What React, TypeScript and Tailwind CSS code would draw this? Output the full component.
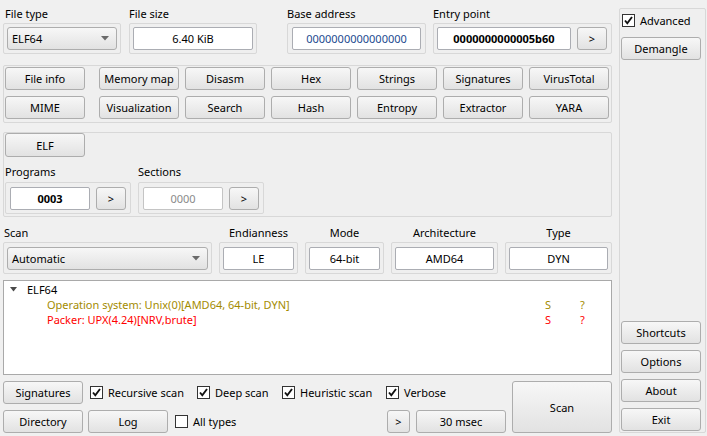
import React from "react";

const Btn = ({ children, className = "" }: { children?: React.ReactNode; className?: string }) => (
  <div
    className={`h-[23px] rounded-[3px] border border-[#adadad] bg-linear-to-b from-[#f7f7f7] to-[#e2e2e2] flex items-center justify-center text-black shrink-0 ${className}`}
  >
    {children}
  </div>
);

const Field = ({ children, className = "" }: { children?: React.ReactNode; className?: string }) => (
  <div
    className={`h-[23px] rounded-[2px] border border-[#abadb3] bg-white flex items-center justify-center shrink-0 ${className}`}
  >
    {children}
  </div>
);

const Frame = ({ children, className = "" }: { children?: React.ReactNode; className?: string }) => (
  <div className={`rounded-[2px] border border-[#d8d8d8] bg-[#efefef] flex items-center ${className}`}>{children}</div>
);

const Combo = ({ text, className = "" }: { text: string; className?: string }) => (
  <div
    className={`h-[23px] rounded-[3px] border border-[#adadad] bg-linear-to-b from-[#f7f7f7] to-[#e2e2e2] flex items-center justify-between pl-[4px] pr-[7px] ${className}`}
  >
    <span>{text}</span>
    <svg width="8" height="5" viewBox="0 0 8 5">
      <polygon points="0,0 8,0 4,4.5" fill="#6a6a6a" />
    </svg>
  </div>
);

const Check = ({ checked, label, className = "" }: { checked: boolean; label: string; className?: string }) => (
  <div className={`flex items-center shrink-0 ${className}`}>
    <div className="w-[13px] h-[13px] border border-[#333] bg-white flex items-center justify-center">
      {checked && (
        <svg width="9" height="9" viewBox="0 0 9 9">
          <polyline points="1,4.5 3.3,7.3 8,1" fill="none" stroke="#111" strokeWidth="1.9" />
        </svg>
      )}
    </div>
    <span className="ml-[5px]">{label}</span>
  </div>
);

const Label = ({ children, className = "" }: { children?: React.ReactNode; className?: string }) => (
  <div className={`h-[15px] flex items-center ${className}`}>{children}</div>
);

export default function App() {
  return (
    <div className="w-[707px] h-[436px] bg-[#f0f0f0] flex font-['Noto_Sans',sans-serif] text-[11px] leading-none text-black overflow-hidden">
      {/* left column */}
      <div className="w-[612px] pl-[3px] flex flex-col shrink-0">
        {/* top row */}
        <div className="flex mt-[6px]">
          <div className="flex flex-col w-[118px]">
            <Label className="pl-[2px]">File type</Label>
            <Frame className="mt-[2px] h-[31px] px-[3px]">
              <Combo text="ELF64" className="w-full" />
            </Frame>
          </div>
          <div className="flex flex-col w-[128px] ml-[8px]">
            <Label>File size</Label>
            <Frame className="mt-[2px] h-[31px] px-[3px]">
              <Field className="w-full">6.40 KiB</Field>
            </Frame>
          </div>
          <div className="flex flex-col w-[139px] ml-[30px]">
            <Label>Base address</Label>
            <Frame className="mt-[2px] h-[31px] px-[4px]">
              <Field className="w-full text-[#1b4a8f]">0000000000000000</Field>
            </Frame>
          </div>
          <div className="flex flex-col w-[179px] ml-[7px]">
            <Label>Entry point</Label>
            <Frame className="mt-[2px] h-[31px] px-[3px] gap-[6px]">
              <Field className="w-[134px] font-bold">0000000000005b60</Field>
              <Btn className="w-[30px]">&gt;</Btn>
            </Frame>
          </div>
        </div>

        {/* button grid */}
        <div className="mt-[11px] h-[58px] w-[609px] rounded-[2px] border border-[#d8d8d8] bg-[#efefef] flex flex-col pt-[1px] pl-[1px] gap-[6px]">
          <div className="flex">
            <Btn className="w-[80px]">File info</Btn>
            <Btn className="w-[80px] ml-[14px]">Memory map</Btn>
            <Btn className="w-[80px] ml-[6px]">Disasm</Btn>
            <Btn className="w-[80px] ml-[6px]">Hex</Btn>
            <Btn className="w-[80px] ml-[6px]">Strings</Btn>
            <Btn className="w-[80px] ml-[6px]">Signatures</Btn>
            <Btn className="w-[80px] ml-[6px]">VirusTotal</Btn>
          </div>
          <div className="flex">
            <Btn className="w-[80px]">MIME</Btn>
            <Btn className="w-[80px] ml-[14px]">Visualization</Btn>
            <Btn className="w-[80px] ml-[6px]">Search</Btn>
            <Btn className="w-[80px] ml-[6px]">Hash</Btn>
            <Btn className="w-[80px] ml-[6px]">Entropy</Btn>
            <Btn className="w-[80px] ml-[6px]">Extractor</Btn>
            <Btn className="w-[80px] ml-[6px]">YARA</Btn>
          </div>
        </div>

        {/* ELF group */}
        <div className="mt-[9px] h-[85px] w-[609px] rounded-[2px] border border-[#d8d8d8] bg-[#efefef] flex flex-col pl-[1px]">
          <Btn className="w-[80px] h-[24px]">ELF</Btn>
          <div className="flex mt-[7px]">
            <div className="flex flex-col w-[126px]">
              <Label>Programs</Label>
              <Frame className="mt-[3px] h-[32px] px-[4px] gap-[6px]">
                <Field className="w-[80px] font-bold">0003</Field>
                <Btn className="w-[30px]">&gt;</Btn>
              </Frame>
            </div>
            <div className="flex flex-col w-[126px] ml-[7px]">
              <Label>Sections</Label>
              <Frame className="mt-[3px] h-[32px] px-[4px] gap-[6px]">
                <Field className="w-[80px] border-[#c4c4c4] bg-[#f3f3f3] text-[#8a8a8a]">0000</Field>
                <Btn className="w-[30px]">&gt;</Btn>
              </Frame>
            </div>
          </div>
        </div>

        {/* scan row */}
        <div className="flex mt-[8px]">
          <div className="flex flex-col w-[209px]">
            <Label className="pl-[1px]">Scan</Label>
            <Frame className="mt-[2px] h-[32px] px-[3px]">
              <Combo text="Automatic" className="w-full" />
            </Frame>
          </div>
          <div className="flex flex-col w-[79px] ml-[7px]">
            <Label className="justify-center">Endianness</Label>
            <Frame className="mt-[2px] h-[32px] px-[3px]">
              <Field className="w-full">LE</Field>
            </Frame>
          </div>
          <div className="flex flex-col w-[79px] ml-[7px]">
            <Label className="justify-center">Mode</Label>
            <Frame className="mt-[2px] h-[32px] px-[3px]">
              <Field className="w-full">64-bit</Field>
            </Frame>
          </div>
          <div className="flex flex-col w-[107px] ml-[7px]">
            <Label className="justify-center">Architecture</Label>
            <Frame className="mt-[2px] h-[32px] px-[3px]">
              <Field className="w-full">AMD64</Field>
            </Frame>
          </div>
          <div className="flex flex-col w-[107px] ml-[7px]">
            <Label className="justify-center">Type</Label>
            <Frame className="mt-[2px] h-[32px] px-[3px]">
              <Field className="w-full">DYN</Field>
            </Frame>
          </div>
        </div>

        {/* tree */}
        <div className="mt-[6px] h-[95px] w-[609px] border border-[#a9a9a9] bg-white pt-[1px] flex flex-col">
          <div className="h-[15px] flex items-center">
            <svg width="7" height="5" viewBox="0 0 7 5" className="ml-[6px]">
              <polygon points="0,0 7,0 3.5,4.5" fill="#4a4a4a" />
            </svg>
            <span className="ml-[10px]">ELF64</span>
          </div>
          <div className="h-[15px] flex items-center text-[#a38b00]">
            <span className="ml-[43px] w-[498px]">Operation system: Unix(0)[AMD64, 64-bit, DYN]</span>
            <span className="w-[35px]">S</span>
            <span>?</span>
          </div>
          <div className="h-[15px] flex items-center text-[#ff0000]">
            <span className="ml-[43px] w-[498px]">Packer: UPX(4.24)[NRV,brute]</span>
            <span className="w-[35px]">S</span>
            <span>?</span>
          </div>
        </div>

        {/* bottom */}
        <div className="mt-[6px] flex">
          <div className="flex flex-col w-[509px] gap-[6px]">
            <div className="flex items-center">
              <Btn className="w-[80px]">Signatures</Btn>
              <Check checked label="Recursive scan" className="ml-[7px] w-[107px]" />
              <Check checked label="Deep scan" className="w-[85px]" />
              <Check checked label="Heuristic scan" className="w-[104px]" />
              <Check checked label="Verbose" />
            </div>
            <div className="flex items-center">
              <Btn className="w-[80px]">Directory</Btn>
              <Btn className="w-[80px] ml-[5px]">Log</Btn>
              <Check checked={false} label="All types" className="ml-[7px] w-[212px]" />
              <Btn className="w-[23px]">&gt;</Btn>
              <Btn className="w-[90px] ml-[6px]">30 msec</Btn>
            </div>
          </div>
          <Btn className="w-[100px] h-[52px]">Scan</Btn>
        </div>
      </div>

      {/* right column */}
      <div className="ml-[7px] mt-[8px] w-[87px] h-[425px] rounded-[2px] border border-[#d8d8d8] bg-[#efefef] flex flex-col pl-[1px]">
        <div className="h-[22px] flex items-center pl-[1px]">
          <Check checked label="Advanced" />
        </div>
        <Btn className="w-[80px] mt-[6px]">Demangle</Btn>
        <div className="mt-auto mb-[1px] flex flex-col gap-[6px]">
          <Btn className="w-[80px]">Shortcuts</Btn>
          <Btn className="w-[80px]">Options</Btn>
          <Btn className="w-[80px]">About</Btn>
          <Btn className="w-[80px]">Exit</Btn>
        </div>
      </div>
    </div>
  );
}
